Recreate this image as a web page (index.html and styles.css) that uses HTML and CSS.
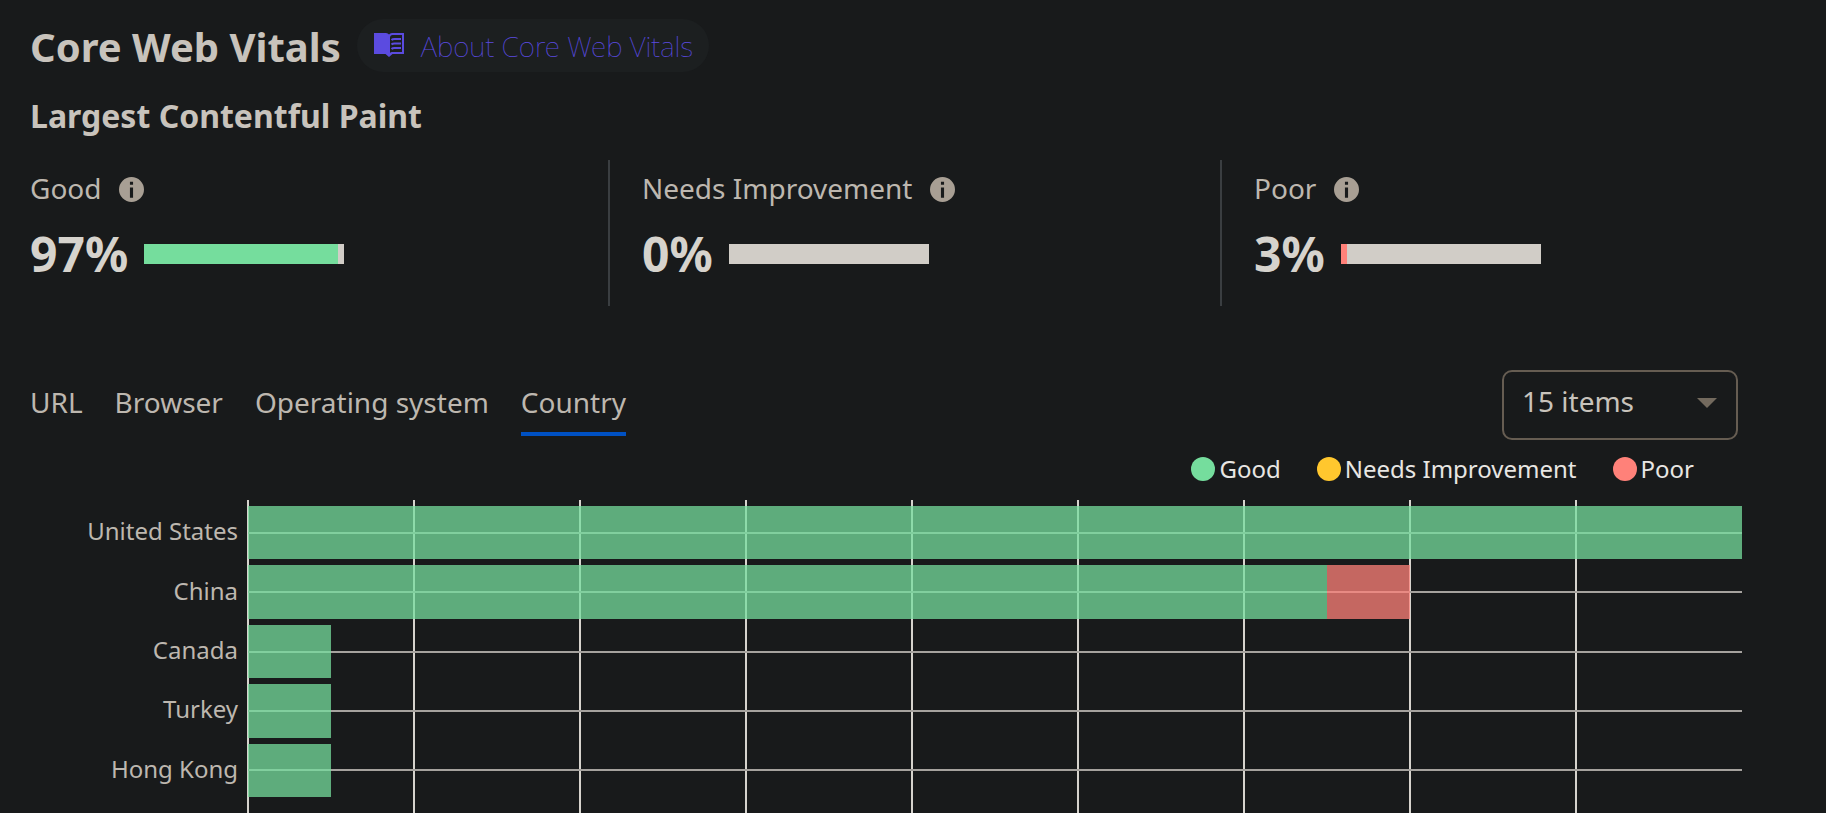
FILE: index.html
```html
<!DOCTYPE html>
<html lang="en">
<head>
<meta charset="utf-8">
<meta name="viewport" content="width=device-width, initial-scale=1">
<title>Core Web Vitals</title>
<link rel="stylesheet" href="styles.css">
</head>
<body>
<svg class="defs" aria-hidden="true">
  <symbol id="info" viewBox="0 0 24 24">
    <path fill-rule="evenodd" d="M12 0a12 12 0 1 0 0 24 12 12 0 0 0 0-24zM10.500 4.500h3v3h-3zM10.500 10h3v10h-3z"/>
  </symbol>
</svg>
<main class="page">
  <header class="header">
    <h1 class="title">Core Web Vitals</h1>
    <a class="about" href="#about">
      <svg class="about-icon" viewBox="0 0 30 24" aria-hidden="true">
        <path fill="currentColor" d="M0 0h12q2 0 3 1.500Q16 0 18 0h12v21H18.500L15 24l-3.500-3H0z"/>
        <path class="about-page" d="M18.500 2H28v17H18q-1.500 0-2 1V4q.500-2 2.500-2z"/>
        <path fill="none" stroke="currentColor" stroke-width="2" d="M17.500 7q1-1 3-1H27M17.500 11.500q1-1 3-1H27M17.500 16q1-1 3-1H27"/>
      </svg>
      <span>About Core Web Vitals</span>
    </a>
  </header>

  <h2 class="metric-title">Largest Contentful Paint</h2>

  <section class="stats">
    <div class="stat">
      <div class="stat-label">Good <button class="info" type="button" aria-label="About Good"><svg viewBox="0 0 24 24"><use href="#info"/></svg></button></div>
      <div class="stat-row"><strong class="stat-value">97%</strong><div class="meter"><div class="meter-fill good" style="width:97%"></div></div></div>
    </div>
    <div class="stat">
      <div class="stat-label">Needs Improvement <button class="info" type="button" aria-label="About Needs Improvement"><svg viewBox="0 0 24 24"><use href="#info"/></svg></button></div>
      <div class="stat-row"><strong class="stat-value">0%</strong><div class="meter"></div></div>
    </div>
    <div class="stat">
      <div class="stat-label">Poor <button class="info" type="button" aria-label="About Poor"><svg viewBox="0 0 24 24"><use href="#info"/></svg></button></div>
      <div class="stat-row"><strong class="stat-value">3%</strong><div class="meter"><div class="meter-fill poor" style="width:3%"></div></div></div>
    </div>
  </section>

  <div class="toolbar">
    <nav class="tabs">
      <button class="tab" type="button">URL</button>
      <button class="tab" type="button">Browser</button>
      <button class="tab" type="button">Operating system</button>
      <button class="tab tab-active" type="button">Country</button>
    </nav>
    <div class="picker">
      <select class="select" aria-label="Number of items"><option>15 items</option></select>
      <svg class="picker-arrow" viewBox="0 0 20 10" aria-hidden="true"><path fill="currentColor" d="M0 0h20L10 10z"/></svg>
    </div>
  </div>

  <ul class="legend">
    <li class="legend-item"><span class="dot good"></span>Good</li>
    <li class="legend-item"><span class="dot needs"></span>Needs Improvement</li>
    <li class="legend-item"><span class="dot poor"></span>Poor</li>
  </ul>

  <section class="chart">
    <div class="names">
      <div class="name">United States</div>
      <div class="name">China</div>
      <div class="name">Canada</div>
      <div class="name">Turkey</div>
      <div class="name">Hong Kong</div>
    </div>
    <div class="plot">
      <div class="grid"><i></i><i></i><i></i><i></i><i></i><i></i><i></i><i></i><i></i></div>
      <div class="bars">
        <div class="bar-row"><div class="bar good" style="width:100%"></div></div>
        <div class="bar-row"><div class="bar good" style="width:72.22%"></div><div class="bar poor" style="width:5.56%"></div></div>
        <div class="bar-row"><div class="bar good" style="width:5.56%"></div></div>
        <div class="bar-row"><div class="bar good" style="width:5.56%"></div></div>
        <div class="bar-row"><div class="bar good" style="width:5.56%"></div></div>
      </div>
    </div>
  </section>
</main>
</body>
</html>
```
FILE: styles.css
```css
* {
  box-sizing: border-box;
}

body {
  margin: 0;
  background: #181a1b;
  color: #bdb7af;
  font-family: "Noto Sans", sans-serif;
  font-size: 28px;
  line-height: 40px;
}

button,
select {
  font: inherit;
  color: inherit;
}

.defs {
  position: absolute;
  width: 0;
  height: 0;
}

.page {
  display: flex;
  flex-direction: column;
  min-height: 100vh;
  padding-top: 19px;
  overflow: hidden;
}

.header {
  display: flex;
  align-items: flex-start;
  gap: 16px;
  padding-left: 30px;
}

.title {
  margin: 0;
  color: #c8c3bc;
  font-size: 40px;
  line-height: 56px;
}

.about {
  display: flex;
  align-items: flex-start;
  gap: 17px;
  height: 53px;
  padding: 7px 16px 0 17px;
  border-radius: 27px;
  background: #1c1f20;
  color: #5b4be0;
  font-weight: 100;
  text-decoration: none;
}

.about-icon {
  width: 30px;
  height: 24px;
  margin-top: 7px;
}

.about-page {
  fill: #1c1f20;
}

.metric-title {
  margin: 19px 0 0;
  padding-left: 30px;
  color: #c8c3bc;
  font-size: 32px;
  line-height: 44px;
}

.stats {
  display: grid;
  grid-template-columns: repeat(3, 1fr);
  margin: 22px -8px 0 -2px;
}

.stat {
  height: 146px;
  padding: 8px 0 0 32px;
  border-right: 2px solid #3a3e41;
}

.stat:last-child {
  border-right: 0;
}

.stat-label {
  display: flex;
  align-items: center;
  gap: 18px;
}

.info {
  width: 25px;
  height: 25px;
  margin-top: 3px;
  padding: 0;
  border: 0;
  background: none;
  color: #a89f94;
}

.info svg {
  display: block;
  fill: currentColor;
}

.stat-row {
  display: flex;
  align-items: center;
  gap: 16px;
  margin-top: 14px;
}

.stat-value {
  color: #d6d3cd;
  font-size: 48px;
  line-height: 64px;
}

.meter {
  width: 200px;
  height: 20px;
  background: #d1cdc7;
}

.meter-fill {
  height: 100%;
}

.good {
  background: #75dd9d;
}

.needs {
  background: #ffc72e;
}

.poor {
  background: #ff8179;
}

.toolbar {
  display: flex;
  justify-content: space-between;
  margin-top: 64px;
  padding: 0 88px 0 30px;
}

.tabs {
  display: flex;
  align-items: flex-start;
  gap: 32px;
}

.tab {
  padding: 12px 0 10px;
  border: 0;
  border-bottom: 4px solid transparent;
  background: none;
}

.tab-active {
  border-color: #0051c3;
}

.picker {
  position: relative;
}

.select {
  appearance: none;
  width: 236px;
  height: 70px;
  padding: 0 18px 8px;
  border: 2px solid #665d52;
  border-radius: 10px;
  background: transparent;
  color: #c8c3bc;
}

.picker-arrow {
  position: absolute;
  top: 28px;
  right: 21px;
  width: 20px;
  height: 10px;
  color: #736a5e;
  pointer-events: none;
}

.legend {
  display: flex;
  justify-content: flex-end;
  gap: 36px;
  margin: 11px 0 0;
  padding: 0 132px 0 0;
  list-style: none;
  color: #e8e6e3;
  font-size: 24px;
  line-height: 36px;
}

.legend-item {
  display: flex;
  align-items: center;
  gap: 4px;
}

.dot {
  width: 24px;
  height: 24px;
  border-radius: 50%;
}

.chart {
  display: grid;
  flex: 1;
  grid-template-columns: 248px 1fr;
  margin-top: 13px;
  padding-right: 84px;
}

.names,
.bars {
  display: flex;
  flex-direction: column;
  height: 300px;
  padding-top: 3px;
}

.name {
  display: flex;
  flex: 1;
  align-items: center;
  justify-content: flex-end;
  padding: 0 10px 3px 0;
  font-size: 24px;
  line-height: 32px;
}

.plot {
  display: grid;
}

.grid,
.bars {
  grid-area: 1 / 1;
}

.grid {
  display: grid;
  grid-template-columns: repeat(9, 1fr);
  margin-left: -1px;
  margin-right: 1px;
}

.grid i {
  border-left: 2px solid #d6d3cd;
}

.bar-row {
  display: flex;
  flex: 1;
  padding: 3px 0;
  background: linear-gradient(#a5a29e, #a5a29e) center / 100% 2px no-repeat;
}

.bar {
  opacity: 0.75;
}
```
